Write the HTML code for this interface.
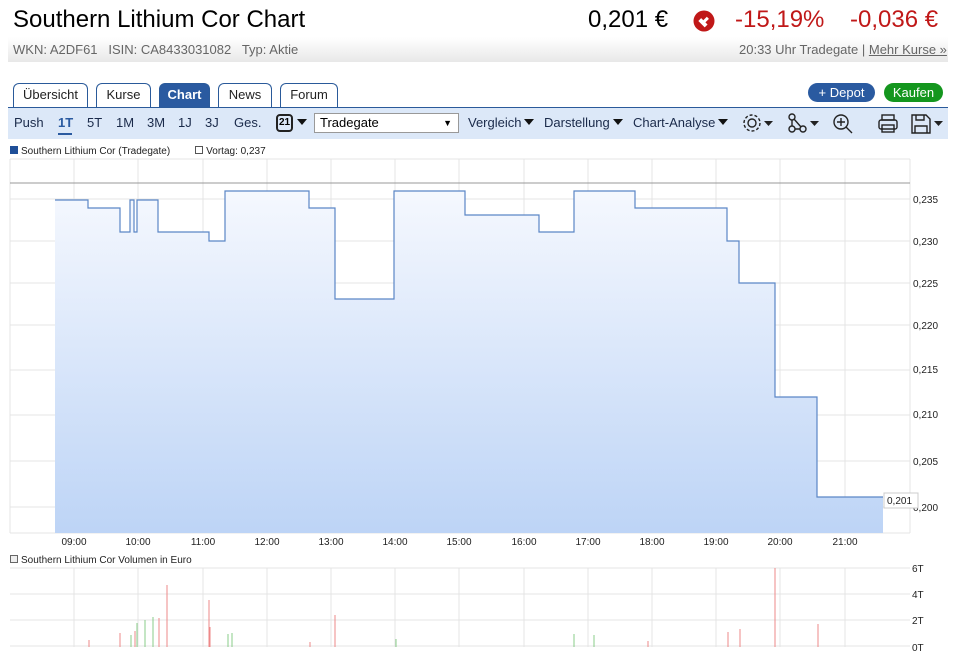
<!DOCTYPE html>
<html><head><meta charset="utf-8"><style>
*{margin:0;padding:0;box-sizing:border-box}
body{width:961px;height:656px;background:#fff;font-family:"Liberation Sans",Arial,sans-serif;position:relative;overflow:hidden;color:#000}
.a{position:absolute;white-space:nowrap}
.tab{position:absolute;top:83px;height:24px;border:1px solid #2a5a9a;border-bottom:none;border-radius:6px 6px 0 0;background:#fff;font-size:13px;text-align:center;line-height:22px;color:#222}
.tb{position:absolute;top:115px;font-size:13px;color:#1a2a4a}
.tri{display:inline-block;width:0;height:0;border-left:5px solid transparent;border-right:5px solid transparent;border-top:6px solid #111;vertical-align:2px;margin-left:3px}
</style></head><body>
<div class="a" style="left:13px;top:6px;font-size:24px">Southern Lithium Cor Chart</div>
<div class="a" style="left:588px;top:6px;font-size:24px">0,201 €</div>
<svg class="a" style="left:693px;top:10px" width="22" height="22"><circle cx="11" cy="11" r="10.5" fill="#c01818"/><path d="M6 7 L15 7 L15 11 L12 11 L12 16 L9 16 L9 11 L6 11Z" fill="#fff" transform="rotate(-135 11 11)"/></svg>
<div class="a" style="left:735px;top:6px;font-size:24px;color:#c01818">-15,19%</div>
<div class="a" style="left:850px;top:6px;font-size:24px;color:#c01818">-0,036 €</div>
<div class="a" style="left:8px;top:37px;width:940px;height:25px;background:linear-gradient(#fff,#e8e8e8)"></div>
<div class="a" style="left:13px;top:42px;font-size:13px;color:#666">WKN: A2DF61 &nbsp; ISIN: CA8433031082 &nbsp; Typ: Aktie</div>
<div class="a" style="left:739px;top:42px;font-size:13px;color:#666">20:33 Uhr Tradegate | <u>Mehr Kurse »</u></div>
<div class="tab" style="left:13px;width:75px">Übersicht</div>
<div class="tab" style="left:96px;width:55px">Kurse</div>
<div class="tab" style="left:159px;width:51px;background:#2a5aa0;color:#fff;font-weight:bold">Chart</div>
<div class="tab" style="left:218px;width:54px">News</div>
<div class="tab" style="left:280px;width:58px">Forum</div>
<div class="a" style="left:808px;top:83px;width:67px;height:19px;border-radius:10px;background:#2a5aa0;color:#fff;font-size:13px;text-align:center;line-height:19px">+ Depot</div>
<div class="a" style="left:884px;top:83px;width:59px;height:19px;border-radius:10px;background:#14961e;color:#fff;font-size:13px;text-align:center;line-height:19px">Kaufen</div>
<div class="a" style="left:8px;top:107px;width:940px;height:32px;background:#dce8f8;border-top:1px solid #2a5a9a"></div>
<div class="tb" style="left:14px">Push</div>
<div class="tb" style="left:58px;font-weight:bold;color:#2a5aa0">1T</div>
<div class="a" style="left:58px;top:133px;width:14px;height:2px;background:#2a5aa0"></div>
<div class="tb" style="left:87px">5T</div>
<div class="tb" style="left:116px">1M</div>
<div class="tb" style="left:147px">3M</div>
<div class="tb" style="left:178px">1J</div>
<div class="tb" style="left:205px">3J</div>
<div class="tb" style="left:234px">Ges.</div>
<div class="a" style="left:276px;top:114px;width:17px;height:18px;border:2px solid #222;border-radius:4px;font-size:10px;font-weight:bold;text-align:center;line-height:14px">21</div>
<div class="tb" style="left:294px"><span class="tri"></span></div>
<div class="a" style="left:314px;top:113px;width:145px;height:20px;border:1px solid #999;background:#fff;font-size:13px;padding-left:5px;line-height:18px">Tradegate<span style="position:absolute;right:6px;font-size:9px">▼</span></div>
<div class="tb" style="left:468px">Vergleich<span class="tri"></span></div>
<div class="tb" style="left:544px">Darstellung<span class="tri"></span></div>
<div class="tb" style="left:633px">Chart-Analyse<span class="tri"></span></div>
<svg class="a" style="left:742px;top:112px" width="210" height="22" fill="none" stroke="#222" stroke-width="1.4">
<circle cx="10" cy="11" r="4"/><circle cx="10" cy="11" r="8" stroke-dasharray="3 2"/>
<path d="M22 9h9l-4.5 5z" fill="#222" stroke="none"/>
<circle cx="50" cy="5" r="3"/><circle cx="50" cy="17" r="3"/><circle cx="61" cy="17" r="3"/><path d="M50 8v6M53 17h5M52 7l7 8"/>
<path d="M68 9h9l-4.5 5z" fill="#222" stroke="none"/>
<circle cx="99" cy="10" r="7"/><path d="M104 15l6 6M99 6v8M95 10h8"/>
<rect x="137" y="8" width="18" height="9" rx="2"/><rect x="140" y="3" width="12" height="5"/><rect x="140" y="13" width="12" height="7"/>
<path d="M170 3h14l4 4v14h-18z"/><path d="M174 3v5h8V3M173 21v-7h12v7"/>
<path d="M192 9h9l-4.5 5z" fill="#222" stroke="none"/>
</svg>
<div class="a" style="left:10px;top:146px;font-size:10px;color:#222"><span style="display:inline-block;width:8px;height:8px;background:#1f4f98;margin-right:3px"></span>Southern Lithium Cor (Tradegate) &nbsp; &nbsp; &nbsp; &nbsp; <span style="display:inline-block;width:8px;height:8px;border:1px solid #555;margin-right:3px"></span>Vortag: 0,237</div>
<svg class="a" style="left:0;top:155px" width="961" height="501" font-family="Liberation Sans, sans-serif" font-size="10" fill="#222">
<defs><linearGradient id="g" x1="0" y1="0" x2="0" y2="1"><stop offset="0" stop-color="#f5f8fe"/><stop offset="1" stop-color="#bdd4f6"/></linearGradient></defs>
<g stroke="#e4e4e4">
<line x1="10" y1="4" x2="910" y2="4"/><line x1="10" y1="44" x2="910" y2="44"/><line x1="10" y1="86" x2="910" y2="86"/><line x1="10" y1="128" x2="910" y2="128"/><line x1="10" y1="170" x2="910" y2="170"/><line x1="10" y1="215" x2="910" y2="215"/><line x1="10" y1="260" x2="910" y2="260"/><line x1="10" y1="306" x2="910" y2="306"/><line x1="10" y1="352" x2="910" y2="352"/><line x1="10" y1="378" x2="910" y2="378"/>
<g id="v"><line x1="10" y1="4" x2="10" y2="378"/><line x1="74" y1="4" x2="74" y2="378"/><line x1="138" y1="4" x2="138" y2="378"/><line x1="203" y1="4" x2="203" y2="378"/><line x1="267" y1="4" x2="267" y2="378"/><line x1="331" y1="4" x2="331" y2="378"/><line x1="395" y1="4" x2="395" y2="378"/><line x1="459" y1="4" x2="459" y2="378"/><line x1="524" y1="4" x2="524" y2="378"/><line x1="588" y1="4" x2="588" y2="378"/><line x1="652" y1="4" x2="652" y2="378"/><line x1="716" y1="4" x2="716" y2="378"/><line x1="780" y1="4" x2="780" y2="378"/><line x1="845" y1="4" x2="845" y2="378"/><line x1="910" y1="4" x2="910" y2="378"/></g>
</g>
<path d="M55 378V45H88V53H120V77H130V45H134V77H137V45H158V77H209V86H225V36H309V53H335V144H394V36H465V60H539V77H574V36H635V53H727V86H739V128H775V242H817V342H883V378Z" fill="url(#g)"/>
<path d="M55 45H88V53H120V77H130V45H134V77H137V45H158V77H209V86H225V36H309V53H335V144H394V36H465V60H539V77H574V36H635V53H727V86H739V128H775V242H817V342H883" fill="none" stroke="#5b86c6" stroke-width="1.2"/>
<line x1="10" y1="28" x2="910" y2="28" stroke="#999"/>
<g text-anchor="start"><text x="913" y="48">0,235</text><text x="913" y="90">0,230</text><text x="913" y="132">0,225</text><text x="913" y="174">0,220</text><text x="913" y="218">0,215</text><text x="913" y="263">0,210</text><text x="913" y="310">0,205</text><text x="913" y="356">0,200</text></g>
<rect x="884" y="338" width="34" height="15" fill="#fff" stroke="#ccc"/><text x="887" y="349">0,201</text>
<g text-anchor="middle"><text x="74" y="390">09:00</text><text x="138" y="390">10:00</text><text x="203" y="390">11:00</text><text x="267" y="390">12:00</text><text x="331" y="390">13:00</text><text x="395" y="390">14:00</text><text x="459" y="390">15:00</text><text x="524" y="390">16:00</text><text x="588" y="390">17:00</text><text x="652" y="390">18:00</text><text x="716" y="390">19:00</text><text x="780" y="390">20:00</text><text x="845" y="390">21:00</text></g>
<rect x="10.5" y="400.5" width="7" height="7" fill="#eee" stroke="#666"/><text x="21" y="408">Southern Lithium Cor Volumen in Euro</text>
<g stroke="#e4e4e4"><line x1="10" y1="413" x2="910" y2="413"/><line x1="10" y1="439" x2="910" y2="439"/><line x1="10" y1="465" x2="910" y2="465"/><line x1="10" y1="491" x2="910" y2="491"/>
<line x1="74" y1="413" x2="74" y2="492"/><line x1="138" y1="413" x2="138" y2="492"/><line x1="203" y1="413" x2="203" y2="492"/><line x1="267" y1="413" x2="267" y2="492"/><line x1="331" y1="413" x2="331" y2="492"/><line x1="395" y1="413" x2="395" y2="492"/><line x1="459" y1="413" x2="459" y2="492"/><line x1="524" y1="413" x2="524" y2="492"/><line x1="588" y1="413" x2="588" y2="492"/><line x1="652" y1="413" x2="652" y2="492"/><line x1="716" y1="413" x2="716" y2="492"/><line x1="780" y1="413" x2="780" y2="492"/><line x1="845" y1="413" x2="845" y2="492"/></g>
<g stroke="#e88" stroke-width="1"><line x1="89" y1="492" x2="89" y2="485"/><line x1="120" y1="492" x2="120" y2="478"/><line x1="135" y1="492" x2="135" y2="476"/><line x1="159" y1="492" x2="159" y2="463"/><line x1="167" y1="492" x2="167" y2="430"/><line x1="209" y1="492" x2="209" y2="445"/><line x1="335" y1="492" x2="335" y2="460"/><line x1="310" y1="492" x2="310" y2="487"/><line x1="648" y1="492" x2="648" y2="486"/><line x1="728" y1="492" x2="728" y2="477"/><line x1="740" y1="492" x2="740" y2="474"/><line x1="775" y1="492" x2="775" y2="413"/><line x1="818" y1="492" x2="818" y2="469"/><line x1="210" y1="492" x2="210" y2="472"/></g>
<g stroke="#8c8" stroke-width="1"><line x1="137" y1="492" x2="137" y2="468"/><line x1="145" y1="492" x2="145" y2="465"/><line x1="131" y1="492" x2="131" y2="480"/><line x1="228" y1="492" x2="228" y2="479"/><line x1="232" y1="492" x2="232" y2="478"/><line x1="396" y1="492" x2="396" y2="484"/><line x1="574" y1="492" x2="574" y2="479"/><line x1="594" y1="492" x2="594" y2="480"/><line x1="153" y1="492" x2="153" y2="462"/></g>
<g><text x="912" y="417">6T</text><text x="912" y="443">4T</text><text x="912" y="469">2T</text><text x="912" y="496">0T</text></g>
</svg>
</body></html>
